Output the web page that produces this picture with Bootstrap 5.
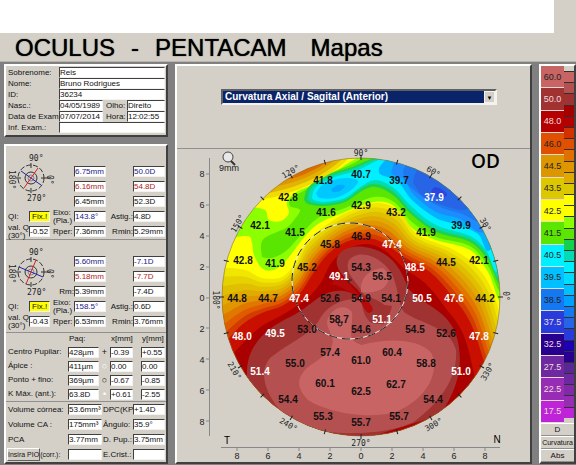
<!DOCTYPE html>
<html lang="pt">
<head>
<meta charset="utf-8">
<meta name="viewport" content="width=device-width, initial-scale=1">
<title>OCULUS - PENTACAM Mapas</title>
<link href="https://cdn.jsdelivr.net/npm/bootstrap@5.3.0/dist/css/bootstrap.min.css" rel="stylesheet">
<style>
body{background:#d4d0c8;color:#111;font:8px/10px "Liberation Sans",Arial,sans-serif}
.top-strip{height:33px}
.top-strip .blank{background:#fff}
.top-strip .edge{width:22px}
.title-bar{height:29px;padding:0 15px;border-bottom:1px solid #b8b4ac}
.title-bar h1{font-size:24px;font-weight:400;line-height:29px;color:#000;text-shadow:0 0 1px #000}
.desk{background:#808080;display:grid;grid-template-columns:164px minmax(0,1fr) 37px;gap:7px;padding:2px 0 2px 4px}
.pane{background:#d4d0c8;border:2px solid;border-color:#fff #404040 #404040 #fff}
.stack{gap:7px}
.cells{display:grid;align-items:center;padding:0 1px}
.cells>label,.cells>span{white-space:nowrap;padding-left:1px}
.cells input{width:100%;min-width:0;height:11px;padding:0;border:1px solid;border-color:#404040 #f4f2ee #f4f2ee #404040;border-radius:0;background:#fff;color:#111;font:inherit;line-height:9px}
.cells input.blue{color:#20208c}
.cells input.red{color:#b01c1c}
.cells input.warn{background:#ff0;padding-left:2px}
.patient{grid-template-columns:52px 44px 24px 38px;grid-auto-rows:11px;padding-top:1px;padding-bottom:2px}
.patient .wide{grid-column:2/5}
.cells>.inset{padding-left:3px}
.kera{grid-template-columns:22px 21px 24px 32px 27px 32px;grid-template-rows:18px repeat(5,15px);border-bottom:1px solid #909090}
.kera.back{grid-template-rows:14px repeat(5,15px);padding-bottom:3px}
.kera .dial{grid-column:1/4;grid-row:1/5;align-self:start;width:52px;height:60px}
.kera input:nth-of-type(1){grid-area:2/4}
.kera input:nth-of-type(2){grid-area:2/6}
.kera input:nth-of-type(3){grid-area:3/4}
.kera input:nth-of-type(4){grid-area:3/6}
.kera input:nth-of-type(5){grid-area:4/4}
.kera input:nth-of-type(6){grid-area:4/6}
.kera .rm{grid-area:4/3;justify-self:end}
.kera .r5{grid-row:5}
.kera .r6{grid-row:6}
.kera .two{line-height:8px}
.kera .end{text-align:right;padding:0}
.pachy{grid-template-columns:61px 31px 11px 23px 8px 24px;grid-template-rows:12px repeat(4,14px);border-bottom:1px solid #909090}
.pachy>.sym{text-align:center;font-size:9px;padding:0}
.volume{grid-template-columns:61px 34px 31px 32px;grid-auto-rows:15px}
.volume .corr{font-size:7px}
.volume button{border:1px solid;border-color:#fff #606060 #606060 #fff;background:#d4d0c8;font:inherit;padding:0;color:#111;line-height:11px}
.chooser{height:83px;padding:23px 33px 0 44px;border-bottom:1px solid #909090}
.picker{height:16px;border:2px solid;border-color:#606060 #f4f2ee #f4f2ee #606060;background:#0a246a}
.picker select{appearance:none;border:0;border-radius:0;background:#0a246a;color:#fff;font:bold 10px/12px "Liberation Sans",Arial,sans-serif;padding:0 2px}
.picker span{width:11px;background:#d4d0c8;color:#000;font-size:6px;line-height:12px;text-align:center;border:1px solid #f4f2ee}
.map svg{display:block;width:100%;overflow:visible}
.map .val{font-weight:bold;font-size:10px;text-anchor:middle;fill:#111}
.map .lit{fill:#fff}
.map .ax{font-size:9px;text-anchor:middle;fill:#222}
.map .deg{font-family:"DejaVu Sans Mono",monospace;font-size:8px;text-anchor:middle;fill:#222}
.steps{width:23px;font-size:9px}
.steps div{border-bottom:1px solid #e8d8d8;color:#222}
.steps .pale{color:#f0dcdc}
.fine{width:10px;padding:5px 0}
.fine div{border-top:1px solid #303030}
.unit{height:13px;line-height:12px;text-align:center;border-top:1px solid #fff;border-bottom:1px solid #909090;white-space:nowrap}
.unit.fit{font-size:7px}
</style>
<script src="https://cdn.jsdelivr.net/npm/bootstrap@5.3.0/dist/js/bootstrap.bundle.min.js"></script>
</head>
<body class="d-flex flex-column min-vh-100">
<div class="top-strip d-flex"><div class="blank flex-grow-1"></div><div class="edge"></div></div>
<header class="title-bar"><h1 class="d-flex gap-3 m-0"><span>OCULUS</span><span>-</span><span>PENTACAM</span><span class="ms-2">Mapas</span></h1></header>

<main class="desk flex-grow-1">
<div class="stack d-flex flex-column">
<section class="pane"><div class="cells patient">
<label for="p1">Sobrenome:</label><input id="p1" class="wide" value="Reis">
<label for="p2">Nome:</label><input id="p2" class="wide" value="Bruno Rodrigues">
<label for="p3">ID:</label><input id="p3" class="wide" value="36234">
<label for="p4">Nasc.:</label><input id="p4" value="04/05/1989"><label for="p5" class="inset">Olho:</label><input id="p5" value="Direito">
<label for="p6">Data de Exam</label><input id="p6" value="07/07/2014"><label for="p7" class="inset">Hora:</label><input id="p7" value="12:02:55">
<label for="p8">Inf. Exam.:</label><input id="p8" class="wide" value="">
</div></section>

<section class="pane flex-grow-1">
<div class="cells kera">
<svg class="dial" viewBox="0 0 52 60"><g fill="none" stroke="#333"><circle cx="24" cy="32" r="13" stroke-dasharray="5 2"/><circle cx="24" cy="32" r="6"/><circle cx="24" cy="32" r="3" stroke="#888"/><path d="M24 17v5M24 42v5M9 32h5M34 32h9"/></g><path d="M14 25L34 39" stroke="#22a"/><path d="M17 42L31 22" stroke="#d22"/><g font-size="8" font-family="DejaVu Sans Mono" fill="#222"><text x="22" y="15">90°</text><text x="20" y="55">270°</text><text transform="translate(2 24) rotate(90)">180°</text><text transform="translate(40 29) rotate(90)">0°</text></g></svg>
<input class="blue" aria-label="Rf" value="6.75mm"><input class="blue" aria-label="K1" value="50.0D">
<input class="red" aria-label="Rs" value="6.16mm"><input class="red" aria-label="K2" value="54.8D">
<input aria-label="Rm" value="6.45mm"><input aria-label="Km" value="52.3D">
<label for="a1" class="r5">QI:</label><input id="a1" class="r5 warn" value="Fix.!"><label for="a2" class="r5 two inset">Eixo:<br>(Pla.)</label><input id="a2" class="r5 blue" value="143.8°"><label for="a3" class="r5 end">Astig.:</label><input id="a3" class="r5" value="4.8D">
<label for="a4" class="r6 two">val. Q<br>(30°)</label><input id="a4" class="r6" value="-0.52"><label for="a5" class="r6 inset">Rper:</label><input id="a5" class="r6" value="7.36mm"><label for="a6" class="r6 end">Rmin:</label><input id="a6" class="r6" value="5.29mm">
</div>
<div class="cells kera back">
<svg class="dial" viewBox="0 0 52 60"><g fill="none" stroke="#333"><circle cx="24" cy="32" r="13" stroke-dasharray="5 2"/><circle cx="24" cy="32" r="6"/><circle cx="24" cy="32" r="3" stroke="#888"/><path d="M24 17v5M24 42v5M9 32h5M34 32h9"/></g><path d="M12 27L36 37" stroke="#22a"/><path d="M19 44L29 20" stroke="#d22"/><g font-size="8" font-family="DejaVu Sans Mono" fill="#222"><text x="22" y="15">90°</text><text x="20" y="55">270°</text><text transform="translate(2 24) rotate(90)">180°</text><text transform="translate(40 29) rotate(90)">0°</text></g></svg>
<input class="blue" aria-label="Rf" value="5.60mm"><input class="blue" aria-label="K1" value="-7.1D">
<input class="red" aria-label="Rs" value="5.18mm"><input class="red" aria-label="K2" value="-7.7D">
<label for="b0" class="rm">Rm:</label><input id="b0" value="5.39mm"><input aria-label="Km" value="-7.4D">
<label for="b1" class="r5">QI:</label><input id="b1" class="r5 warn" value="Fix.!"><label for="b2" class="r5 two inset">Eixo:<br>(Pla.)</label><input id="b2" class="r5 blue" value="158.5°"><label for="b3" class="r5 end">Astig.:</label><input id="b3" class="r5" value="0.6D">
<label for="b4" class="r6 two">val. Q<br>(30°)</label><input id="b4" class="r6" value="-0.43"><label for="b5" class="r6 inset">Rper:</label><input id="b5" class="r6" value="6.53mm"><label for="b6" class="r6 end">Rmin:</label><input id="b6" class="r6" value="3.76mm">
</div>
<div class="cells pachy">
<span></span><span>Paq:</span><span></span><span>x[mm]</span><span></span><span>y[mm]</span>
<label for="c1">Centro Pupilar:</label><input id="c1" value="428µm"><span class="sym">+</span><input aria-label="x pupila" value="-0.39"><span></span><input aria-label="y pupila" value="+0.55">
<label for="c2">Ápice :</label><input id="c2" value="411µm"><span class="sym text-white">○</span><input aria-label="x ápice" value="0.00"><span></span><input aria-label="y ápice" value="0.00">
<label for="c3">Ponto + fino:</label><input id="c3" value="369µm"><span class="sym">○</span><input aria-label="x fino" value="-0.67"><span></span><input aria-label="y fino" value="-0.85">
<label for="c4">K Máx. (ant.):</label><input id="c4" value="63.8D"><span class="sym text-white">•</span><input aria-label="x K" value="+0.61"><span></span><input aria-label="y K" value="-2.55">
</div>
<div class="cells volume">
<label for="d1">Volume córnea:</label><input id="d1" value="53.6mm³"><label for="d2">DPC(KP</label><input id="d2" value="+1.4D">
<label for="d3">Volume CA :</label><input id="d3" value="175mm³"><label for="d4">Ângulo:</label><input id="d4" value="35.9°">
<label for="d5">PCA</label><input id="d5" value="3.77mm"><label for="d6">D. Pup.:</label><input id="d6" value="3.75mm">
<div class="corr d-flex align-items-center text-nowrap"><button type="button">Insira PIO</button><label for="d7">(corr.):</label></div><input id="d7" value=""><label for="d8">E.Crist.:</label><input id="d8" value="">
</div>
</section>
</div>

<section class="pane d-flex flex-column">
<div class="chooser"><div class="picker d-flex"><select class="flex-grow-1" aria-label="Mapa"><option>Curvatura Axial / Sagital (Anterior)</option></select><span aria-hidden="true">▼</span></div></div>
<div class="map flex-grow-1">
<svg viewBox="177 149 353 312" role="img" aria-label="Curvatura Axial / Sagital (Anterior), OD">
<defs><clipPath id="disc"><circle cx="361" cy="297" r="139"/></clipPath></defs>
<g clip-path="url(#disc)">
<rect x="220" y="156" width="283" height="283" fill="#ffff00"/>
<g id="cool"></g>
<path d="M255 200C285 198 330 180 352 155L280 150Z" fill="#f0dc00"/>
<path d="M262 194C290 190 325 178 346 155L280 150Z" fill="#e0b400"/>
<path d="M270 187C295 184 320 174 341 155L280 150Z" fill="#e09600"/>
<path d="M278 181C298 179 318 170 336 155L280 150Z" fill="#dc6e00"/>
<g id="warm"></g>
<path d="M248 385C242 350 262 330 292 316C312 306 322 288 344 291C352 292 358 297 362 296C358 286 341 280 337 265C334 250 352 243 370 248C394 254 402 272 408 288C420 304 446 308 456 334C464 362 460 385 440 415L361 440L270 420Z" fill="#a03232"/>
<path d="M292 422C268 402 256 374 270 358C290 342 308 336 318 322C326 306 340 298 361 299C364 312 372 326 384 324C392 314 392 304 364 295C358 282 343 274 349 260C360 248 382 257 392 274C399 290 398 304 404 312C420 324 450 326 456 350C458 378 440 402 415 421C390 436 320 438 292 422Z" fill="#b45050"/>
<path d="M361 296C368 302 376 304 392 306C390 318 380 328 370 322C362 314 362 304 361 296Z" fill="#a03232"/>
<path d="M299 384C300 364 324 362 332 346C336 336 324 328 328 318C334 306 346 304 352 312C354 328 344 340 362 345C386 338 420 338 432 354C440 376 424 400 396 412C366 420 326 412 308 400Q300 392 299 384ZM361 292C360 276 370 270 382 268C392 272 390 286 380 290Q370 294 361 292Z" fill="#c86464"/>
<path d="M337 270C344 280 352 286 358 294Q372 302 373 310Q369 317 364 308C358 294 344 288 332 284Z" fill="#b40a0a"/>
</g>
<circle cx="361" cy="297" r="139" fill="none" stroke="#8a6a40" stroke-width="1" stroke-opacity=".6"/>
<circle cx="350" cy="281" r="58" fill="none" stroke="#eee"/><circle cx="350" cy="281" r="58" fill="none" stroke="#222" stroke-dasharray="8 5"/>
<g id="ticks" stroke="#222"></g>
<g stroke="#888" fill="none"><path d="M209.500 158V436M221 447.500H500"/><path d="M206 174h3M206 205h3M206 236h3M206 267h3M206 298h3M206 328h3M206 359h3M206 390h3M206 421h3M237 448v3M268 448v3M299 448v3M330 448v3M361 448v3M392 448v3M423 448v3M454 448v3M485 448v3"/></g>
<g fill="none" stroke="#222"><circle cx="340" cy="324" r="2"/><path d="M347 280h5M349 278v5"/><path d="M361 295v6M359 298h4" stroke="#fff"/></g>
<circle cx="228" cy="157" r="5" fill="#e8e8e8" stroke="#444"/><path d="M231 161l4 4" stroke="#333" stroke-width="2"/>
<text x="229" y="171" class="ax">9mm</text>
<text x="471" y="168" font-size="19" font-weight="600" font-family="Open Sans, sans-serif">OD</text>
<text x="227" y="444" font-size="10" text-anchor="middle">T</text><text x="497" y="443" font-size="10" text-anchor="middle">N</text>
<g class="deg"><text x="361" y="156">90°</text><text x="361" y="446">270°</text><text transform="translate(292 174) rotate(-30)">120°</text><text transform="translate(240 225) rotate(-60)">150°</text><text transform="translate(213 300) rotate(90)">180°</text><text transform="translate(432 174) rotate(30)">60°</text><text transform="translate(483 226) rotate(60)">30°</text><text transform="translate(503 296) rotate(90)">0°</text><text transform="translate(232 372) rotate(60)">210°</text><text transform="translate(287 427) rotate(30)">240°</text><text transform="translate(435 427) rotate(-30)">300°</text><text transform="translate(490 373) rotate(-60)">330°</text></g>
<g id="labels"></g>
</svg>
</div>
</section>

<aside class="pane d-flex flex-column">
<div class="d-flex flex-grow-1"><div class="steps d-flex flex-column" id="steps"></div><div class="fine d-flex flex-column" id="fine"></div></div>
<div class="unit">D</div><div class="unit fit">Curvatura</div><div class="unit">Abs</div>
</aside>
</main>

<script>
const NS = 'http://www.w3.org/2000/svg';
const byId = id => document.getElementById(id);
function add(parent, tag, attrs, text) {
  const el = document.createElementNS(NS, tag);
  for (const k in attrs) el.setAttribute(k, attrs[k]);
  if (text) el.textContent = text;
  byId(parent).appendChild(el);
}
// Smooth curve through the points, closed by the given tail.
function smooth(p, tail) {
  let d = 'M' + p[0];
  for (let i = 0; i < p.length - 1; i++) {
    const a = p[i - 1] || p[i], b = p[i], c = p[i + 1], e = p[i + 2] || c;
    d += 'C' + [b[0] + (c[0] - a[0]) / 6, b[1] + (c[1] - a[1]) / 6, c[0] - (e[0] - b[0]) / 6, c[1] - (e[1] - b[1]) / 6, c[0], c[1]];
  }
  return d + tail + 'Z';
}
const mix = (p, q, t) => p.map((v, i) => [v[0] + (q[i][0] - v[0]) * t, v[1] + (q[i][1] - v[1]) * t]);

// Cool zones, each from the left end of its lower edge to the rim, then back along its upper edge.
const cool = [
  ['#8cff00', [[220,240],[247,236],[252,243],[254,255],[263,269],[276,269],[289,257],[302,240],[318,224],[345,212],[374,202],[394,206],[412,228],[436,240],[470,250],[488,272],[503,300],[510,200],[440,140],[372,154],[352,161],[320,182],[298,191],[287,202],[289,213],[281,221],[269,220],[265,210],[250,207]]],
  ['#5ae600', [[262,257],[261,245],[266,237],[286,228],[294,220],[300,210],[290,206],[291,198],[305,190],[325,176],[352,164],[377,152],[440,140],[510,200],[503,290],[488,266],[470,246],[436,237],[412,222],[394,202],[374,197],[345,208],[318,218],[300,236],[286,251],[272,258],[262,257]]],
  ['#1ed250', [[304,199],[308,188],[322,177],[352,167],[382,155],[440,140],[510,200],[502,282],[488,260],[470,242],[436,232],[412,215],[394,196],[376,187],[362,191],[345,202],[325,206],[308,204],[304,199]]],
  ['#00dcb4', [[308,198],[312,187],[328,177],[355,168],[385,156],[440,140],[510,200],[500,276],[488,256],[470,239],[436,229],[412,212],[394,192],[376,184],[362,188],[345,200],[325,204],[311,202],[308,198]]],
  ['#00f0ff', [[312,197],[316,187],[332,178],[358,170],[388,156],[440,140],[510,200],[498,270],[486,250],[470,236],[436,225],[412,207],[394,188],[376,180],[362,186],[345,198],[325,202],[314,200],[312,197]]],
  ['#00b4ff', [[380,166],[394,155],[440,140],[510,200],[490,250],[478,234],[458,225],[436,218],[412,200],[398,182],[380,174],[380,166]]],
  ['#1e8cff', [[392,170],[400,155],[440,140],[510,200],[484,232],[460,219],[436,212],[414,195],[404,180],[392,174],[392,170]]],
  ['#1e78f0', [[403,170],[415,160],[450,170],[490,225],[462,214],[440,207],[420,195],[406,182],[403,170]]],
  ['#2864e6', [[413,183],[416,172],[428,160],[470,200],[464,210],[445,206],[425,198],[413,183]]],
  ['#2a46dc', [[431,191],[435,187],[441,189],[447,194],[443,198],[435,196],[431,191]]],
  ['#00c8ff', [[316,193],[325,183],[345,178],[358,181],[350,191],[335,198],[320,198],[316,193]]],
  ['#00aaff', [[331,189],[338,185],[345,186],[340,191],[333,192],[331,189]]]
];
cool.forEach(([fill, p]) => add('cool', 'path', {fill, d: smooth(p, '')}));

// Warm zones lie below these edges, which run from the left rim to the right rim.
const first = [[218,267],[245,270],[262,278],[282,277],[296,262],[306,242],[325,226],[348,212],[378,203],[400,212],[418,235],[452,249],[476,266],[492,290],[504,330]];
const red = [[222,346],[243,324],[262,313],[282,306],[300,293],[314,272],[328,254],[346,242],[366,238],[384,243],[404,257],[430,272],[452,296],[471,324],[488,374]];
const dark = [[226,362],[246,340],[262,326],[282,315],[304,301],[320,284],[332,262],[348,249],[366,244],[384,250],[404,268],[426,284],[444,306],[464,336],[478,392]];
const tail = 'L500 445L222 445';
['#f0e600','#e6d200','#e0be00','#e0aa00','#e09600','#e07800','#e05a00','#d23c00','#c80f00'].forEach((fill, i) =>
  add('warm', 'path', {fill, d: smooth(mix(first, red, i / 8), tail)}));
add('warm', 'path', {fill: '#aa0000', d: smooth(dark, tail)});

for (let a = 0; a < 360; a += 15) add('ticks', 'path', {d: 'M498 297h5', transform: `rotate(${a} 361 297)`});

// x, centre y, value; a trailing 1 marks light text.
const values = [[361,174,'40.7'],[399,180,'39.7'],[434,197,'37.9',1],[323,180,'41.8'],[288,197,'42.8'],[326,212,'41.6'],[361,205,'42.9'],[396,212,'43.2'],[426,232,'41.9'],[461,225,'39.9'],[260,225,'42.1'],[295,232,'41.5'],[330,244,'45.8'],[361,236,'46.9'],[392,244,'47.4',1],[446,262,'44.5'],[479,260,'42.1'],[243,260,'42.8'],[275,263,'41.9'],[307,267,'45.2'],[361,267,'54.3'],[382,276,'56.5'],[339,276,'49.1',1],[415,267,'48.5',1],[237,298,'44.8'],[268,298,'44.7'],[299,298,'47.4',1],[330,298,'52.6'],[361,298,'54.9'],[391,298,'54.1'],[422,298,'50.5',1],[454,298,'47.6',1],[485,298,'44.2'],[339,319,'58.7'],[382,319,'51.1',1],[307,329,'53.0'],[361,329,'54.6'],[415,329,'54.5'],[446,333,'52.6'],[479,336,'47.8',1],[242,336,'48.0',1],[275,333,'49.5',1],[330,352,'57.4'],[392,352,'60.4'],[361,360,'61.0'],[295,363,'55.0'],[426,363,'58.8'],[260,371,'51.4',1],[461,371,'51.0',1],[325,383,'60.1'],[361,391,'62.5'],[396,384,'62.7'],[288,399,'54.4'],[433,399,'54.4'],[323,416,'55.3'],[361,422,'55.7'],[399,416,'55.7']];
values.forEach(([x, y, v, light]) => add('labels', 'text', {x, y: y + 4, class: light ? 'val lit' : 'val'}, v));
[8,6,4,2,0,2,4,6,8].forEach((n, i) => {
  add('labels', 'text', {x: 202, y: 177 + i * 31, class: 'ax'}, String(n));
  add('labels', 'text', {x: 237 + i * 31, y: 459, class: 'ax'}, String(n));
});

[['60.0','#c86464'],['50.0','#a03232',1],['48.0','#b40000',1],['46.0','#e05000'],['44.5','#dc9600'],['43.5','#dcc800'],['42.5','#ffff00'],['41.5','#5ae600'],['40.5','#00f0ff'],['39.5','#00c0ff'],['38.5','#1478f0'],['37.5','#283cdc',1],['32.5','#280090',1],['27.5','#6e28a0',1],['22.5','#962db4',1],['17.5','#be23d7',1]].forEach(([v, c, pale]) => {
  const el = document.createElement('div');
  el.className = 'flex-fill d-flex align-items-center justify-content-center' + (pale ? ' pale' : '');
  el.style.background = c;
  el.textContent = v;
  byId('steps').appendChild(el);
});
'#c86464 #b45050 #a03232 #a50000 #b40000 #d23200 #e05000 #e07000 #e09600 #e0aa00 #dcc800 #ffff00 #ffff00 #8cff00 #5ae600 #14d250 #00dcb4 #00f0ff #00dcff #00c0ff #00a0ff #1478f0 #2864e6 #283cdc #1e00b4 #280090 #5a2896 #6e28a0 #8228aa #962db4 #be23d7'.split(' ').forEach(c => {
  const el = document.createElement('div');
  el.className = 'flex-fill';
  el.style.background = c;
  byId('fine').appendChild(el);
});
</script>
</body>
</html>
